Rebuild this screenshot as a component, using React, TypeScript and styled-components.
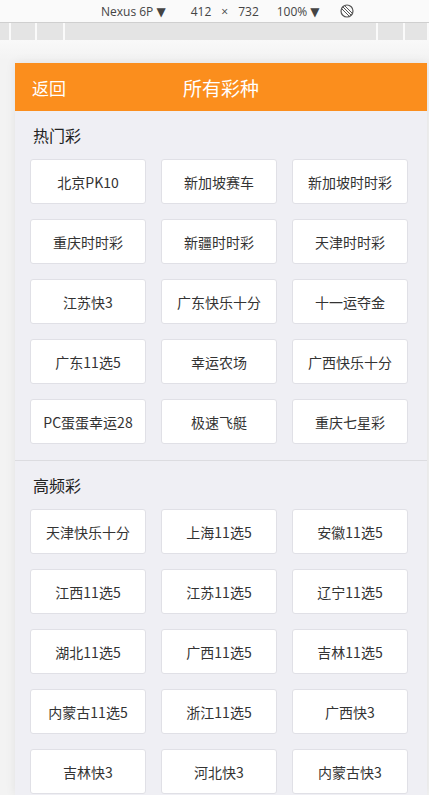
import styled, { createGlobalStyle } from "styled-components";

const Global = createGlobalStyle`
  html, body {
    margin: 0;
    padding: 0;
    background: #f3f3f3;
    overflow: hidden;
  }
`;

const Shell = styled.div`
  width: 429px;
  height: 795px;
  display: flex;
  flex-direction: column;
  font-family: "Noto Sans CJK SC", "DejaVu Sans", sans-serif;
`;

const DevBar = styled.div`
  height: 23px;
  background: #fafafa;
  border-bottom: 1px solid #cfcfcf;
  display: flex;
  align-items: center;
  font-family: "Open Sans", "DejaVu Sans", sans-serif;
  font-size: 12px;
  color: #444;
  padding-left: 101px;
  box-sizing: border-box;
`;

const DevItem = styled.span<{ $gap?: number }>`
  margin-right: ${(p) => p.$gap ?? 0}px;
  white-space: nowrap;
`;

const Ruler = styled.div`
  height: 17px;
  background: #e4e4e4;
  display: flex;
`;

const RulerCell = styled.div<{ $w: number }>`
  width: ${(p) => p.$w}px;
  flex: ${(p) => (p.$w === 0 ? 1 : "none")};
  border-right: 2px solid #fafafa;
`;

const Stage = styled.div`
  flex: 1;
  background: linear-gradient(#f9f9f9, #f3f3f3 20px);
  padding: 23px 2px 0 15px;
  overflow: hidden;
`;

const Device = styled.div`
  width: 412px;
  height: 100%;
  background: #efeff4;
  box-shadow: 0 0 10px rgba(0, 0, 0, 0.08);
`;

const Header = styled.div`
  height: 48px;
  background: #fb8e1d;
  color: #fff;
  display: flex;
  align-items: center;
  position: relative;
  padding-left: 17px;
`;

const Back = styled.span`
  font-size: 17px;
`;

const Title = styled.span`
  position: absolute;
  left: 0;
  right: 0;
  text-align: center;
  font-size: 19px;
  pointer-events: none;
`;

const Section = styled.div<{ $last?: boolean }>`
  padding-bottom: 16px;
  border-bottom: ${(p) => (p.$last ? "none" : "1px solid #dcdce0")};
`;

const SectionTitle = styled.div`
  height: 48px;
  line-height: 48px;
  padding-left: 18px;
  font-size: 16px;
  color: #222;
`;

const Grid = styled.div`
  display: grid;
  grid-template-columns: repeat(3, 1fr);
  column-gap: 15px;
  row-gap: 15px;
  padding: 0 19px 0 15px;
`;

const Item = styled.div`
  height: 45px;
  box-sizing: border-box;
  background: #fff;
  border: 1px solid #e0e0e6;
  border-radius: 3px;
  display: flex;
  align-items: center;
  justify-content: center;
  font-size: 14px;
  color: #333;
  white-space: nowrap;
`;

const hot = [
  "北京PK10", "新加坡赛车", "新加坡时时彩",
  "重庆时时彩", "新疆时时彩", "天津时时彩",
  "江苏快3", "广东快乐十分", "十一运夺金",
  "广东11选5", "幸运农场", "广西快乐十分",
  "PC蛋蛋幸运28", "极速飞艇", "重庆七星彩",
];

const freq = [
  "天津快乐十分", "上海11选5", "安徽11选5",
  "江西11选5", "江苏11选5", "辽宁11选5",
  "湖北11选5", "广西11选5", "吉林11选5",
  "内蒙古11选5", "浙江11选5", "广西快3",
  "吉林快3", "河北快3", "内蒙古快3",
];

function RotateIcon() {
  return (
    <svg width="14" height="14" viewBox="0 0 14 14">
      <circle cx="7" cy="7" r="6" fill="none" stroke="#555" strokeWidth="1.2" />
      <path d="M3 3 L11 11 M5 2 L12 9 M2 5 L9 12" stroke="#555" strokeWidth="1" />
    </svg>
  );
}

export default function App() {
  return (
    <Shell>
      <Global />
      <DevBar>
        <DevItem $gap={25}>Nexus 6P ▼</DevItem>
        <DevItem $gap={10}>412</DevItem>
        <DevItem $gap={10}>×</DevItem>
        <DevItem $gap={18}>732</DevItem>
        <DevItem $gap={20}>100% ▼</DevItem>
        <RotateIcon />
      </DevBar>
      <Ruler>
        <RulerCell $w={9} />
        <RulerCell $w={24} />
        <RulerCell $w={26} />
        <RulerCell $w={0} />
        <RulerCell $w={25} />
        <RulerCell $w={22} />
      </Ruler>
      <Stage>
        <Device>
          <Header>
            <Back>返回</Back>
            <Title>所有彩种</Title>
          </Header>
          <Section>
            <SectionTitle>热门彩</SectionTitle>
            <Grid>
              {hot.map((n) => (
                <Item key={n}>{n}</Item>
              ))}
            </Grid>
          </Section>
          <Section $last>
            <SectionTitle>高频彩</SectionTitle>
            <Grid>
              {freq.map((n) => (
                <Item key={n}>{n}</Item>
              ))}
            </Grid>
          </Section>
        </Device>
      </Stage>
    </Shell>
  );
}
